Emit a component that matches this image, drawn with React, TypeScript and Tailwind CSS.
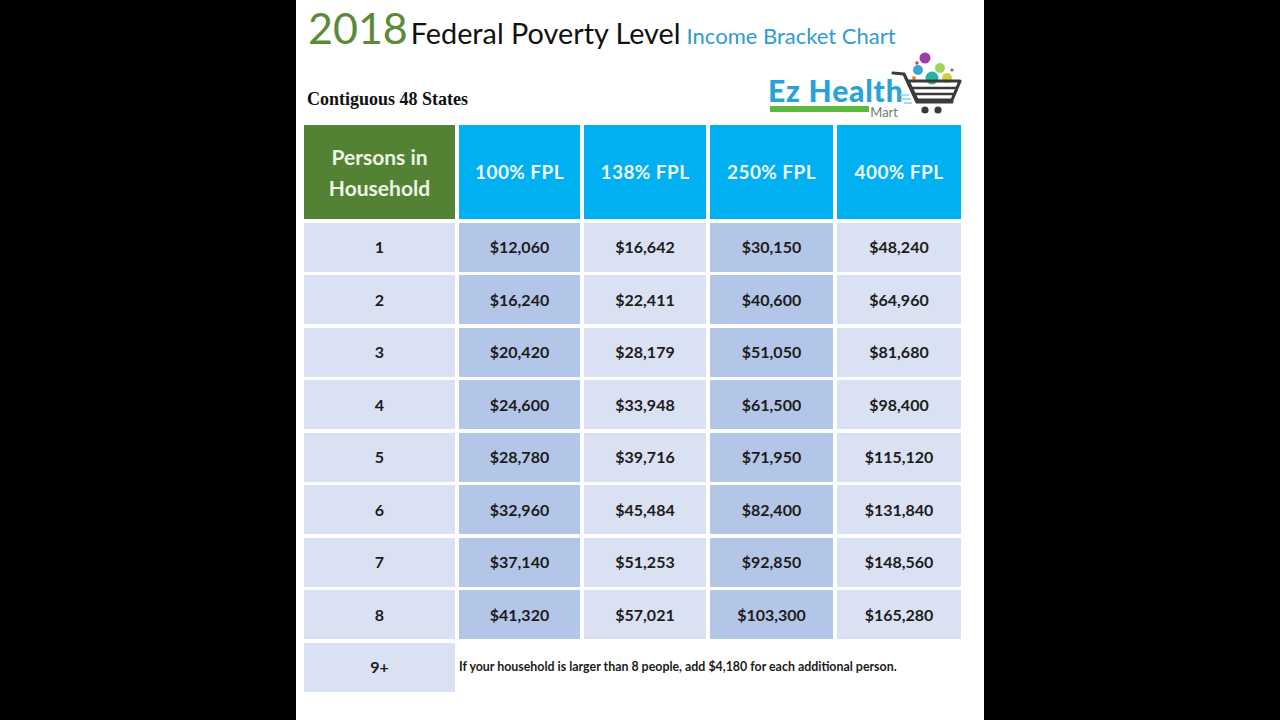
import React from "react";

const rows: [string, string, string, string, string][] = [
  ["1", "$12,060", "$16,642", "$30,150", "$48,240"],
  ["2", "$16,240", "$22,411", "$40,600", "$64,960"],
  ["3", "$20,420", "$28,179", "$51,050", "$81,680"],
  ["4", "$24,600", "$33,948", "$61,500", "$98,400"],
  ["5", "$28,780", "$39,716", "$71,950", "$115,120"],
  ["6", "$32,960", "$45,484", "$82,400", "$131,840"],
  ["7", "$37,140", "$51,253", "$92,850", "$148,560"],
  ["8", "$41,320", "$57,021", "$103,300", "$165,280"],
];

const font = { fontFamily: "Lato, 'Open Sans', sans-serif" };

// cart + floating icons, drawn in a 75x66 box
function CartLogo() {
  return (
    <svg width="75" height="66" viewBox="0 0 75 66" className="-ml-[8px] mb-[5px]">
      <circle cx="35" cy="8" r="5.5" fill="#9b3fa8" />
      <circle cx="27" cy="13" r="1.8" fill="#e8473a" />
      <circle cx="28" cy="20" r="5" fill="#3aa6d8" />
      <circle cx="50" cy="18" r="5" fill="#9fd35a" />
      <circle cx="62" cy="20" r="1.6" fill="#7e5aa8" />
      <circle cx="24" cy="28" r="2" fill="#f08a24" />
      <circle cx="42" cy="28" r="6.5" fill="#2bb3a2" />
      <circle cx="57" cy="28" r="5" fill="#d9cf3c" />
      <path
        d="M3 23 L14 24 L27 52 L62 52"
        fill="none"
        stroke="#3a3a3a"
        strokeWidth="3.2"
        strokeLinejoin="round"
        strokeLinecap="round"
      />
      <path
        d="M18 31 L70 31 L62 50 L27 50 Z"
        fill="none"
        stroke="#3a3a3a"
        strokeWidth="3.2"
        strokeLinejoin="round"
      />
      <path d="M20 38 L67 38" stroke="#3a3a3a" strokeWidth="2.6" />
      <path d="M23 44 L65 44" stroke="#3a3a3a" strokeWidth="2.6" />
      <circle cx="35" cy="60" r="3.6" fill="#3a3a3a" />
      <circle cx="48" cy="60" r="3.6" fill="#3a3a3a" />
      <path d="M10 45 L19 45 M12 49 L21 49 M14 53 L22 53" stroke="#8fd0ec" strokeWidth="1.4" />
    </svg>
  );
}

function Cell({
  children,
  dark,
}: {
  children: React.ReactNode;
  dark?: boolean;
}) {
  return (
    <div
      className={`flex items-center justify-center text-[16px] font-bold text-[#1c1c1c] ${
        dark ? "bg-[#b4c6e7]" : "bg-[#d9e1f2]"
      }`}
    >
      {children}
    </div>
  );
}

export default function App() {
  return (
    <div className="flex h-[720px] w-full justify-center bg-black" style={font}>
      <div className="h-[720px] w-[688px] bg-white pl-[8px]">
        <div className="flex h-[52px] items-baseline pt-[6px] pl-[4px]">
          <span className="text-[43px] leading-[43px] text-[#5a8a3a]">2018</span>
          <span className="ml-[3px] text-[28.8px] leading-[28px] text-[#111]">
            Federal Poverty Level
          </span>
          <span className="ml-[6px] text-[22px] leading-[22px] text-[#2f9bd0]">
            Income Bracket Chart
          </span>
        </div>
        <div className="flex h-[69px] items-end justify-between pr-[19px]">
          <div
            className="mb-[8px] ml-[3px] text-[18px] leading-[27px] font-bold text-[#111]"
            style={{ fontFamily: "'Liberation Serif', serif" }}
          >
            Contiguous 48 States
          </div>
          <div className="flex items-end">
            <div className="mb-[2px] flex w-[130px] flex-col">
              <span className="text-[30px] leading-[32px] font-black tracking-[0.8px] whitespace-nowrap text-[#27a3d8]">
                Ez Health
              </span>
              <div className="flex items-start">
                <div className="ml-[2px] h-[6px] w-[100px] bg-[#5cb840]" />
                <span className="ml-[1px] text-[13px] leading-[13px] text-[#6e7e72]">
                  Mart
                </span>
              </div>
            </div>
            <CartLogo />
          </div>
        </div>
        <div className="mt-[4px] grid grid-cols-[151px_121px_122px_123px_124px] grid-rows-[94px_repeat(9,49px)] gap-x-[4px] gap-y-[3.5px]">
          <div className="flex flex-col items-center justify-center bg-[#548235] text-[21px] leading-[31px] font-bold text-[#eef4e6]">
            <span>Persons in</span>
            <span>Household</span>
          </div>
          {["100% FPL", "138% FPL", "250% FPL", "400% FPL"].map((h) => (
            <div
              key={h}
              className="flex items-center justify-center bg-[#00b0f0] text-[19px] font-bold tracking-[0.4px] text-[#eef8fd]"
            >
              {h}
            </div>
          ))}
          {rows.map((r) => (
            <React.Fragment key={r[0]}>
              <Cell>{r[0]}</Cell>
              <Cell dark>{r[1]}</Cell>
              <Cell>{r[2]}</Cell>
              <Cell dark>{r[3]}</Cell>
              <Cell>{r[4]}</Cell>
            </React.Fragment>
          ))}
          <Cell>9+</Cell>
          <div className="col-span-4 flex items-center text-[12.4px] font-bold text-[#1c1c1c]">
            If your household is larger than 8 people, add $4,180 for each
            additional person.
          </div>
        </div>
      </div>
    </div>
  );
}
